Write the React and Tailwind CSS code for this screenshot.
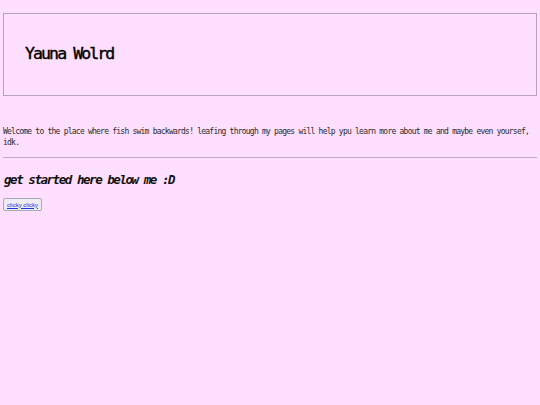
import React from 'react';

const mono = "font-['DejaVu_Sans_Mono','Liberation_Mono',monospace]";

export default function App() {
  return (
    <div className="min-h-[405px] w-full bg-[#ffdfff] px-[3px] pt-[13px] text-[#111]">
      <header className="flex h-[83px] items-center border border-[#b5a3b9] pl-[21px]">
        <h1 className={`${mono} text-[16.5px] leading-none tracking-[-1.9px] text-black [-webkit-text-stroke:0.4px_black]`}>
          Yauna Wolrd
        </h1>
      </header>

      <p className={`${mono} mt-[30px] text-[8px] leading-[11px] tracking-[-0.77px] text-[#2a2a2a]`}>
        Welcome to the place where fish swim backwards! leafing through my pages will help ypu learn more about me and maybe even yoursef, idk.
      </p>

      <hr className="mt-[9px] border-t border-[#bfaebf]" />

      <h2 className={`${mono} mt-[14px] pl-px text-[12.5px] font-bold italic leading-[16px] tracking-[-1.45px]`}>
        get started here below me :D
      </h2>

      <button className="mt-[10px] flex h-[13px] items-center rounded-[2px] border border-[#a9a9b5] bg-[#ececf2] px-[3px]">
        <a href="#" className="font-['Liberation_Sans',Arial,sans-serif] text-[6px] leading-none text-[#2233dd] underline">
          clicky clicky
        </a>
      </button>
    </div>
  );
}
